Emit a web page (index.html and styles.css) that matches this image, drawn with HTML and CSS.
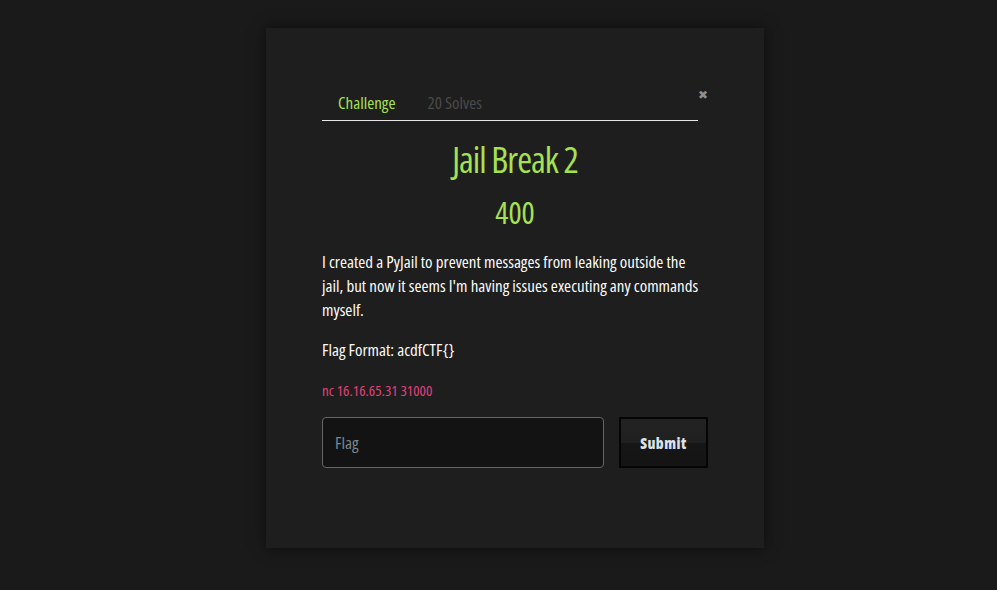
FILE: index.html
```html
<!DOCTYPE html>
<html>
<head>
<meta charset="utf-8">
<link rel="stylesheet" href="styles.css">
</head>
<body>
<div class="page">
  <div class="modal">
    <div class="tabs-row">
      <div class="tabs">
        <span class="tab active">Challenge</span>
        <span class="tab muted">20 Solves</span>
      </div>
      <span class="close">&#10006;</span>
    </div>
    <h1 class="title">Jail Break 2</h1>
    <div class="points">400</div>
    <p class="desc">I created a PyJail to prevent messages from leaking outside the<br>jail, but now it seems I'm having issues executing any commands<br>myself.</p>
    <p class="desc">Flag Format: acdfCTF{}</p>
    <p class="conn">nc 16.16.65.31 31000</p>
    <div class="form">
      <input class="flag" type="text" placeholder="Flag">
      <button class="submit">Submit</button>
    </div>
  </div>
</div>
</body>
</html>
```
FILE: styles.css
```css
* { box-sizing: border-box; }
html, body { margin: 0; padding: 0; }
body {
  background: #1a1a1a;
  font-family: "Open Sans", "DejaVu Sans Condensed", sans-serif;
  font-stretch: 75%;
  color: #f0f0f0;
  width: 997px;
  height: 590px;
  overflow: hidden;
}
.page {
  display: flex;
  justify-content: flex-start;
  padding: 28px 0 0 266px;
}
.modal {
  width: 498px;
  height: 520px;
  background: #1e1e1e;
  box-shadow: 0 0 14px rgba(0,0,0,0.55);
  padding: 64px 56px 0 56px;
}
.tabs-row { position: relative; width: 376px; }
.tabs {
  display: flex;
  gap: 32px;
  padding: 0 0 6px 16px;
  border-bottom: 1px solid #e8e8e8;
}
.tab { font-size: 17px; line-height: 22px; font-weight: 500; }
.tab.active { color: #a6e153; }
.tab.muted { color: #4a4a4a; }
.close {
  position: absolute;
  right: -10px;
  top: -4px;
  font-size: 12px;
  color: #8f8f8f;
  font-family: "DejaVu Sans", sans-serif;
  font-stretch: normal;
}
.title {
  margin: 19px 0 0;
  text-align: center;
  font-weight: 500;
  font-size: 36px;
  line-height: 40px;
  letter-spacing: -1px;
  color: #a6e153;
}
.points {
  margin-top: 14px;
  text-align: center;
  font-size: 31px;
  line-height: 36px;
  font-weight: 500;
  color: #a6e153;
}
.desc {
  margin: 20px 0 0;
  font-size: 17px;
  line-height: 24px;
  font-weight: 500;
  color: #fafafa;
  width: 420px;
  white-space: nowrap;
}
.desc + .desc { margin-top: 16px; }
.conn {
  margin: 18px 0 0;
  font-size: 15px;
  line-height: 20px;
  font-weight: 500;
  color: #e0427a;
}
.form {
  display: flex;
  gap: 15px;
  margin-top: 17px;
  width: 386px;
}
.flag {
  width: 282px;
  height: 51px;
  border: 1px solid #666;
  border-radius: 4px;
  background: #131313;
  color: #ddd;
  font-family: inherit;
  font-stretch: 75%;
  font-size: 17px;
  padding: 0 12px;
}
.flag::placeholder { color: #7b8590; }
.submit {
  width: 89px;
  height: 51px;
  border: 2px solid #050505;
  background: linear-gradient(#222 0%, #202020 50%, #161616 51%, #141414 100%);
  color: #dde0e6;
  font-family: inherit;
  font-stretch: 75%;
  font-weight: 800;
  font-size: 15px;
  letter-spacing: 0.5px;
}
```
